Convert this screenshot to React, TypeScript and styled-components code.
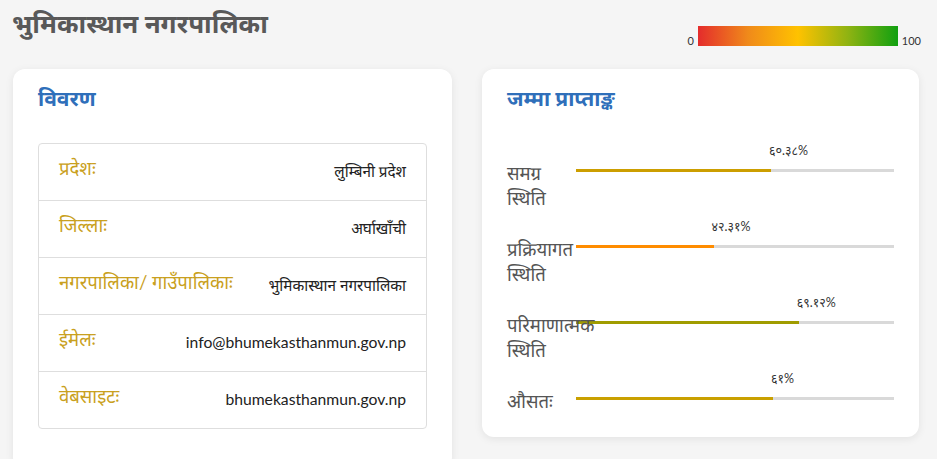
import React from "react";
import styled, { createGlobalStyle } from "styled-components";

const Global = createGlobalStyle`
  html, body { margin: 0; padding: 0; background: #f5f5f5; }
  body { font-family: Lato, "Noto Sans Devanagari", "Noto Sans", sans-serif; }
`;

const Page = styled.div`
  width: 937px;
  height: 459px;
  overflow: hidden;
  box-sizing: border-box;
`;

const Header = styled.header`
  display: flex;
  justify-content: space-between;
  align-items: flex-start;
  padding: 0 17px 0 12px;
  height: 69px;
`;

const PageTitle = styled.h1`
  margin: 0;
  font-size: 26px;
  line-height: 46px;
  font-weight: 700;
  color: #595959;
`;

const Legend = styled.div`
  display: flex;
  align-items: flex-end;
  gap: 4px;
  margin-top: 26px;
  margin-right: -1px;
  font-size: 11px;
  color: #333;
`;

const LegendNum = styled.span`
  line-height: 12px;
  margin-bottom: -1px;
`;

const Gradient = styled.div`
  width: 200px;
  height: 20px;
  background: linear-gradient(to right, #e42c2c 0%, #f08a1a 25%, #ffc200 50%, #8fb312 75%, #10a010 100%);
`;

const Columns = styled.main`
  display: grid;
  grid-template-columns: 439px 437px;
  gap: 30px;
  padding-left: 13px;
  align-items: start;
`;

const Card = styled.section<{ $bottom: number }>`
  background: #fff;
  border-radius: 12px;
  box-shadow: 0 2px 8px rgba(0, 0, 0, 0.08);
  padding: 12px 25px ${(p) => p.$bottom}px 25px;
`;

const CardTitle = styled.h2`
  margin: 0;
  font-size: 21px;
  line-height: 34px;
  font-weight: 700;
  color: #2f6fba;
`;

const Table = styled.div`
  margin-top: 28px;
  border: 1px solid #dedede;
  border-radius: 4px;
`;

const Row = styled.div`
  display: flex;
  justify-content: space-between;
  align-items: flex-start;
  height: 57px;
  box-sizing: border-box;
  padding: 10px 20px 0 20px;
  border-top: 1px solid #dedede;
  &:first-child { border-top: none; height: 56px; }
`;

const Label = styled.span`
  font-size: 18.5px;
  line-height: 28px;
  color: #c9a020;
`;

const Value = styled.span<{ $latin?: boolean }>`
  font-size: ${(p) => (p.$latin ? "15.7px" : "15.3px")};
  line-height: 28px;
  margin-top: 3px;
  color: #222;
`;

const Scores = styled.div`
  display: flex;
  flex-direction: column;
  gap: 23px;
  margin-top: 43px;
`;

const ScoreRow = styled.div`
  display: flex;
  align-items: flex-start;
`;

const ScoreLabel = styled.span`
  width: 69px;
  flex: none;
  padding-top: 3px;
  font-size: 18.5px;
  line-height: 25px;
  color: #555;
  position: relative;
  z-index: 1;
`;

const Track = styled.div`
  position: relative;
  flex: 1;
  height: 3px;
  margin-top: 11px;
  background: #d9d9d9;
`;

const Fill = styled.div<{ $color: string }>`
  height: 3px;
  background: ${(p) => p.$color};
`;

const Pct = styled.span`
  position: absolute;
  top: -25px;
  font-size: 12.5px;
  line-height: 14px;
  color: #333;
  white-space: nowrap;
`;

const details: [string, string, boolean][] = [
  ["प्रदेशः", "लुम्बिनी प्रदेश", false],
  ["जिल्लाः", "अर्घाखाँची", false],
  ["नगरपालिका/ गाउँपालिकाः", "भुमिकास्थान नगरपालिका", false],
  ["ईमेलः", "info@bhumekasthanmun.gov.np", true],
  ["वेबसाइटः", "bhumekasthanmun.gov.np", true],
];

const scores = [
  { label: "समग्र स्थिति", pct: 60.38, text: "६०.३८%", color: "#cc9e00" },
  { label: "प्रक्रियागत स्थिति", pct: 42.31, text: "४२.३१%", color: "#ff8c00" },
  { label: "परिमाणात्मक स्थिति", pct: 69.12, text: "६९.१२%", color: "#a09c00" },
  { label: "औसतः", pct: 61, text: "६१%", color: "#c9a000" },
];

export default function App() {
  return (
    <Page>
      <Global />
      <Header>
        <PageTitle>भुमिकास्थान नगरपालिका</PageTitle>
        <Legend>
          <LegendNum>0</LegendNum>
          <Gradient />
          <LegendNum>100</LegendNum>
        </Legend>
      </Header>
      <Columns>
        <Card $bottom={40}>
          <CardTitle>विवरण</CardTitle>
          <Table>
            {details.map(([l, v, latin]) => (
              <Row key={l}>
                <Label>{l}</Label>
                <Value $latin={latin}>{v}</Value>
              </Row>
            ))}
          </Table>
        </Card>
        <Card $bottom={23}>
          <CardTitle>जम्मा प्राप्ताङ्क</CardTitle>
          <Scores>
            {scores.map((s) => (
              <ScoreRow key={s.label}>
                <ScoreLabel>{s.label}</ScoreLabel>
                <Track>
                  <Fill $color={s.color} style={{ width: `calc(${s.pct}% + 3px)` }} />
                  <Pct style={{ left: `calc(${s.pct}% + 1px)` }}>{s.text}</Pct>
                </Track>
              </ScoreRow>
            ))}
          </Scores>
        </Card>
      </Columns>
    </Page>
  );
}
